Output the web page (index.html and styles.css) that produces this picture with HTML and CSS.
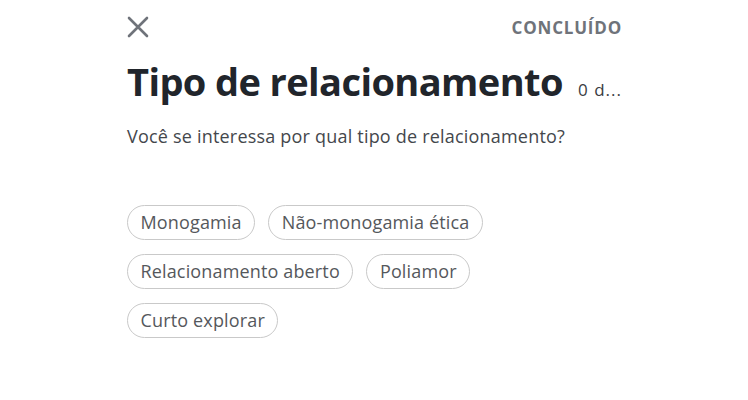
FILE: index.html
```html
<!DOCTYPE html>
<html lang="pt-BR">
<head>
  <meta charset="UTF-8">
  <title>Tipo de relacionamento</title>
  <link rel="stylesheet" href="styles.css">
</head>
<body>

  <div class="page">
    <div class="topbar">
      <button class="close" aria-label="Fechar">
        <svg width="22" height="22" viewBox="0 0 22 22">
          <path d="M2 2 L20 20 M20 2 L2 20" stroke="#6f737a" stroke-width="2.6" stroke-linecap="round"/>
        </svg>
      </button>
      <span class="done">CONCLUÍDO</span>
    </div>

    <div class="heading">
      <h1>Tipo de relacionamento</h1>
      <span class="count">0 d...</span>
    </div>

    <p class="question">Você se interessa por qual tipo de relacionamento?</p>

    <div class="chips">
      <span class="chip">Monogamia</span>
      <span class="chip">Não-monogamia ética</span>
      <span class="chip">Relacionamento aberto</span>
      <span class="chip">Poliamor</span>
      <span class="chip">Curto explorar</span>
    </div>
  </div>

</body>
</html>
```

FILE: styles.css
```css
body {
  margin: 0;
  background: #fff;
  font-family: "Open Sans", sans-serif;
}

.page {
  width: 495px;
  margin-left: 127px;
  padding-top: 16px;
}

.topbar {
  display: flex;
  justify-content: space-between;
  align-items: center;
  height: 22px;
}

.close {
  border: 0;
  background: none;
  padding: 0;
  width: 22px;
  height: 22px;
  cursor: pointer;
}

.done {
  font-size: 17px;
  font-weight: bold;
  color: #6f737a;
  letter-spacing: 0.8px;
}

.heading {
  display: flex;
  align-items: baseline;
  justify-content: space-between;
  margin-top: 17px;
}

h1 {
  margin: 0;
  font-size: 38px;
  font-weight: bold;
  letter-spacing: -0.6px;
  color: #21252b;
}

.count {
  font-size: 17px;
  letter-spacing: 1px;
  color: #3a3d42;
}

.question {
  margin: 17px 0 0;
  font-size: 18px;
  letter-spacing: 0.2px;
  color: #44474c;
}

.chips {
  display: flex;
  flex-wrap: wrap;
  gap: 14px 13px;
  margin-top: 57px;
  width: 420px;
}

.chip {
  border: 1.5px solid #c9c9c9;
  border-radius: 19px;
  height: 33px;
  line-height: 33px;
  padding: 0 12.5px;
  font-size: 18px;
  letter-spacing: 0.15px;
  color: #55585c;
}
```
